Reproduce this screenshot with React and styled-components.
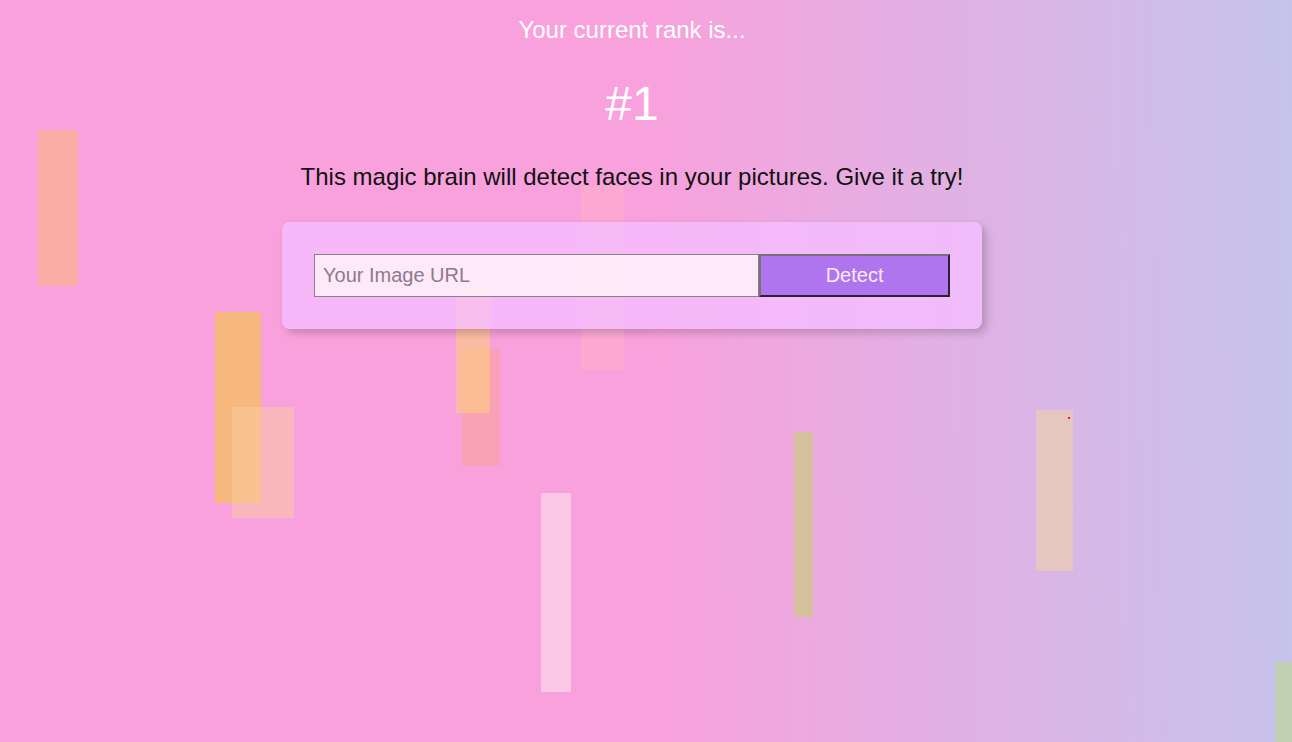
import React from "react";
import styled, { createGlobalStyle } from "styled-components";

const particles = [
  { x: 38, y: 130, w: 40, h: 156, c: "#f8aea5" },
  { x: 215, y: 312, w: 46, h: 191, c: "#f7b87e" },
  { x: 232, y: 407, w: 62, h: 111, c: "rgba(250, 205, 158, 0.5)" },
  { x: 462, y: 349, w: 38, h: 117, c: "#f9a2b5" },
  { x: 456, y: 287, w: 34, h: 126, c: "rgba(251, 205, 125, 0.6)" },
  { x: 581, y: 186, w: 43, h: 184, c: "rgba(255, 182, 198, 0.4)" },
  { x: 541, y: 493, w: 30, h: 199, c: "#fcc8e7" },
  { x: 794, y: 432, w: 19, h: 185, c: "#d4c09c" },
  { x: 1036, y: 410, w: 37, h: 161, c: "#e6c6c0" },
  { x: 1068, y: 417, w: 2, h: 2, c: "#ff1a1a" },
  { x: 1275, y: 662, w: 17, h: 80, c: "#c0cfb1" },
];

const App = () => {
  return (
    <>
      <GlobalStyle />
      <Page>
        <ParticleLayer>
          {particles.map((p, i) => (
            <Particle key={i} $x={p.x} $y={p.y} $w={p.w} $h={p.h} $c={p.c} />
          ))}
        </ParticleLayer>
        <Content>
          <RankTitle>Your current rank is...</RankTitle>
          <RankNumber>#1</RankNumber>
          <Intro>
            This magic brain will detect faces in your pictures. Give it a try!
          </Intro>
          <FormCard>
            <UrlInput type="text" placeholder="Your Image URL" />
            <DetectButton>Detect</DetectButton>
          </FormCard>
        </Content>
      </Page>
    </>
  );
};

const GlobalStyle = createGlobalStyle`
  html, body {
    margin: 0;
    height: 100%;
  }
  body {
    font-family: "Liberation Sans", Arial, sans-serif;
  }
`;

const Page = styled.main`
  position: relative;
  min-height: 100vh;
  overflow: hidden;
  background: linear-gradient(89deg, #f9a1dc 0%, #f9a1dc 50%, #c5c3ec 100%);
`;

const ParticleLayer = styled.div`
  position: absolute;
  inset: 0;
  z-index: 0;
`;

const Particle = styled.span`
  position: absolute;
  left: ${(p) => p.$x}px;
  top: ${(p) => p.$y}px;
  width: ${(p) => p.$w}px;
  height: ${(p) => p.$h}px;
  background: ${(p) => p.$c};
`;

const Content = styled.div`
  position: relative;
  z-index: 1;
  display: flex;
  flex-direction: column;
  align-items: center;
  padding: 16px 28px 0 0;
  text-align: center;
`;

const RankTitle = styled.div`
  color: #fff;
  font-size: 24px;
  line-height: 28px;
`;

const RankNumber = styled.div`
  margin-top: 32px;
  color: #fff;
  font-size: 48px;
  line-height: 55px;
`;

const Intro = styled.p`
  margin: 32px 0 0;
  color: #111;
  font-size: 24px;
  line-height: 28px;
`;

const FormCard = styled.div`
  display: flex;
  box-sizing: border-box;
  width: 700px;
  margin-top: 31px;
  padding: 32px;
  border-radius: 8px;
  background: rgba(245, 190, 255, 0.8);
  box-shadow: 4px 4px 8px 0 rgba(0, 0, 0, 0.2);
`;

const UrlInput = styled.input`
  box-sizing: border-box;
  width: 70%;
  margin: 0;
  padding: 8px;
  border: 1px solid #8c7f8a;
  border-radius: 0;
  background: rgba(255, 250, 250, 0.75);
  font-family: inherit;
  font-size: 20px;
  color: #333;
  outline: none;

  &::placeholder {
    color: #8d7b89;
  }
`;

const DetectButton = styled.button`
  box-sizing: border-box;
  width: 30%;
  margin: 0;
  padding: 8px 16px;
  border: 2px solid;
  border-color: #77707a #2e2232 #2e2232 #77707a;
  background: #b174ef;
  color: #f8ecfc;
  font-family: inherit;
  font-size: 20px;
  line-height: 23px;
  cursor: pointer;
`;

export default App;
